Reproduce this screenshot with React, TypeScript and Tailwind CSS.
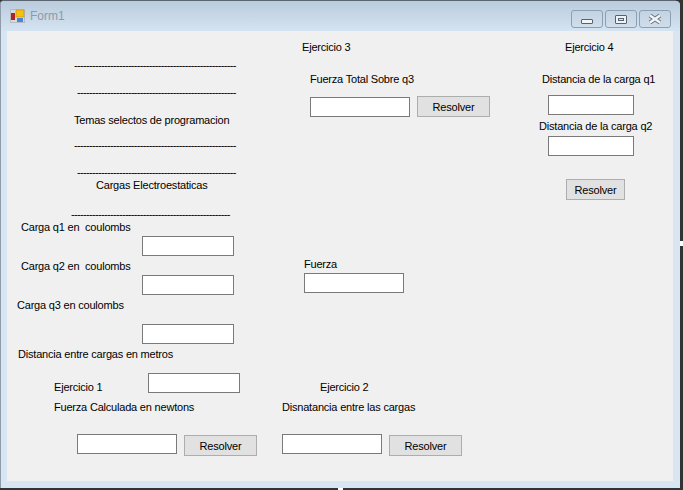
const labels: [string, number, number][] = [
  ["Ejercicio 3", 302, 40],
  ["Ejercicio 4", 565, 40],
  ["Fuerza Total Sobre q3", 310, 72],
  ["Distancia de la carga q1", 542, 72],
  ["Temas selectos de programacion", 74, 113],
  ["Distancia de la carga q2", 539, 119],
  ["Cargas Electroestaticas", 96, 178],
  ["Carga q1 en  coulombs", 21, 220],
  ["Carga q2 en  coulombs", 21, 259],
  ["Fuerza", 304, 257],
  ["Carga q3 en coulombs", 17, 298],
  ["Distancia entre cargas en metros", 18, 347],
  ["Ejercicio 1", 54, 380],
  ["Ejercicio 2", 320, 380],
  ["Fuerza Calculada en newtons", 54, 400],
  ["Disnatancia entre las cargas", 282, 400],
];

// separators typed as hyphens in the form: x, y, width
const dashes: [number, number, number][] = [
  [74, 58, 162],
  [77, 85, 159],
  [74, 138, 162],
  [77, 165, 159],
  [71, 207, 159],
];

const inputs: [number, number, number, number][] = [
  [310, 97, 100, 20],
  [548, 95, 86, 20],
  [548, 136, 86, 20],
  [142, 236, 92, 20],
  [142, 275, 92, 20],
  [304, 273, 100, 20],
  [142, 324, 92, 20],
  [148, 373, 92, 20],
  [77, 434, 100, 20],
  [282, 434, 100, 20],
];

const buttons: [number, number, number][] = [
  [417, 96, 73],
  [566, 179, 59],
  [184, 435, 73],
  [389, 435, 73],
];

function Caption({ children }: { children: React.ReactNode }) {
  return (
    <div className="w-[32px] h-[18px] flex items-center justify-center rounded-[3px] border border-[#8c9fb5] bg-gradient-to-b from-[#c4d3e2] to-[#d0deeb]">
      {children}
    </div>
  );
}

export default function App() {
  return (
    <div className="relative w-[683px] h-[490px] overflow-hidden bg-[#333333] font-['Liberation_Sans',Arial,sans-serif]">
      <div className="w-[680px] h-[488px] flex flex-col rounded-tr-[6px] rounded-tl-[4px] border-t border-l border-t-[#5b6570] border-l-[#8e9cab] bg-[#d8e5f3]">
        <div className="h-[30px] shrink-0 flex items-center justify-between pl-[9px] pr-[8px] rounded-t-[4px] bg-gradient-to-b from-[#b9cbdc] to-[#d6e4f2]">
          <div className="flex items-center gap-[5px]">
            <svg width="15" height="14" viewBox="0 0 15 14">
              <rect x="0.5" y="0.5" width="14" height="13" fill="#d4dbe2" stroke="#b5bcc4" />
              <rect x="6" y="1" width="8" height="7" fill="#f5c211" stroke="#c98a10" strokeWidth="0.6" />
              <rect x="1" y="4" width="4" height="7" fill="#b22222" />
              <rect x="7" y="9" width="6" height="4" fill="#4a86d8" />
            </svg>
            <span className="text-[12px] text-[#8f9aa6]">Form1</span>
          </div>
          <div className="flex items-center gap-[2px] mt-[6px] mr-[1px]">
            <Caption>
              <div className="w-[12px] h-[5px] mt-[4px] rounded-[1px] border border-[#56626f] bg-[#f2f5f8]" />
            </Caption>
            <Caption>
              <div className="w-[12px] h-[9px] rounded-[1px] border border-[#56626f] bg-[#eef2f6] flex items-center justify-center">
                <div className="w-[6px] h-[3px] border border-[#56626f] bg-[#dde5ee]" />
              </div>
            </Caption>
            <Caption>
              <svg width="16" height="12" viewBox="0 0 16 12">
                <path d="M3 2.5l10 7M13 2.5l-10 7" stroke="#66727f" strokeWidth="4.4" />
                <path d="M3 2.5l10 7M13 2.5l-10 7" stroke="#f2f5f8" strokeWidth="2.6" />
              </svg>
            </Caption>
          </div>
        </div>
        <div className="relative w-[666px] h-[450px] ml-[6px] bg-[#f0f0f0] text-[11px] tracking-[-0.2px] leading-[14px] text-black">
          {labels.map(([text, x, y]) => (
            <span
              key={text}
              className="absolute whitespace-pre"
              style={{ left: x - 7, top: y - 31 }}
            >
              {text}
            </span>
          ))}
          {dashes.map(([x, y, width]) => (
            <span
              key={y}
              className="absolute whitespace-pre tracking-[-0.67px]"
              style={{ left: x - 7, top: y - 31, width }}
            >
              {"-".repeat(Math.floor(width / 3))}
            </span>
          ))}
          {inputs.map(([x, y, width, height]) => (
            <input
              key={`${x}-${y}`}
              className="absolute bg-white border border-[#7a7a7a] outline-none"
              style={{ left: x - 7, top: y - 31, width, height }}
            />
          ))}
          {buttons.map(([x, y, width]) => (
            <button
              key={`${x}-${y}`}
              className="absolute h-[21px] flex items-center justify-center bg-[#e1e1e1] border border-[#adadad]"
              style={{ left: x - 7, top: y - 31, width }}
            >
              Resolver
            </button>
          ))}
        </div>
      </div>
      <div className="absolute left-[680px] top-[241px] w-[3px] h-[5px] bg-white" />
      <div className="absolute left-[338px] top-[488px] w-[5px] h-[2px] bg-white" />
    </div>
  );
}
